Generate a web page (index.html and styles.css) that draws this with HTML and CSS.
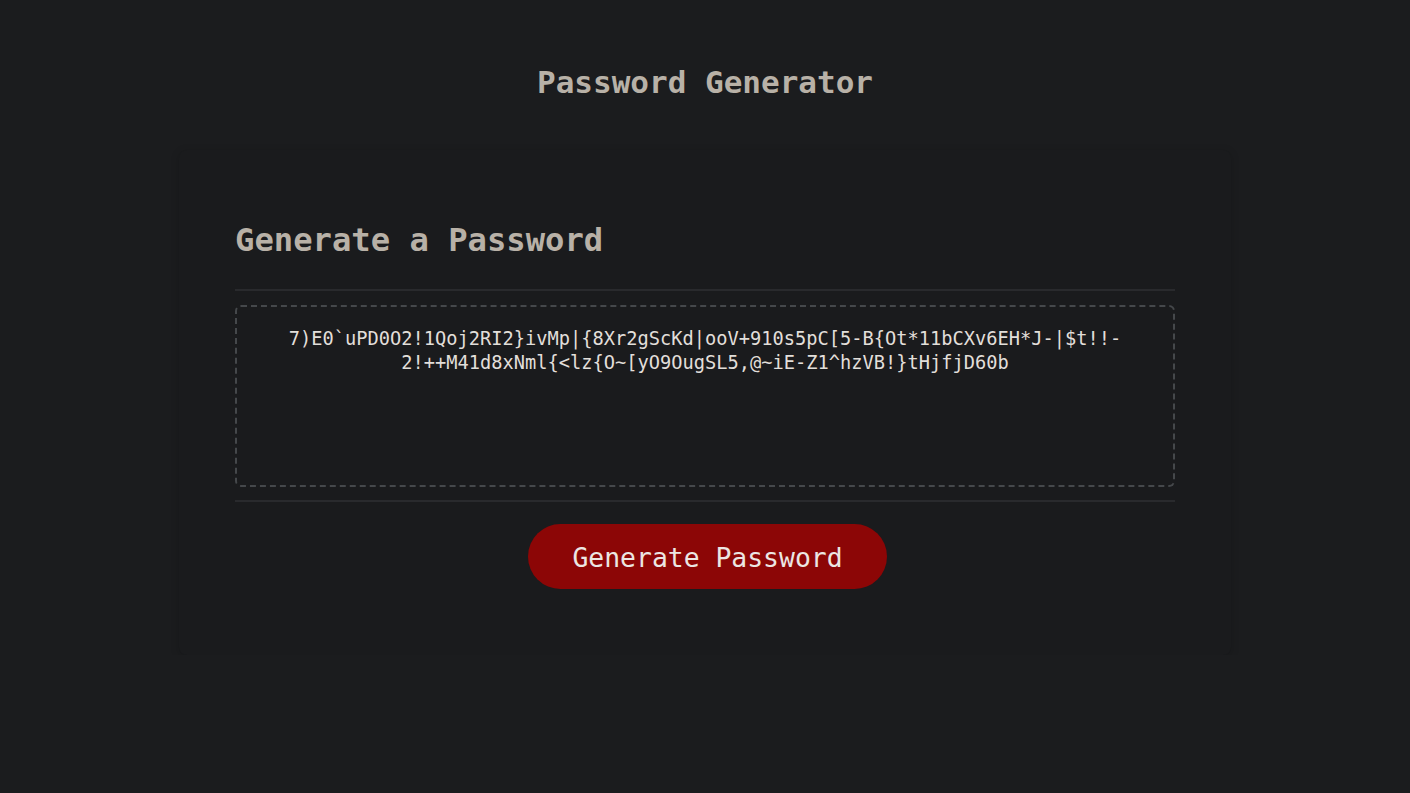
FILE: index.html
```html
<!DOCTYPE html>
<html lang="en">
<head>
<meta charset="UTF-8">
<title>Password Generator</title>
<link rel="stylesheet" href="styles.css">
</head>
<body>
<div class="wrapper">
  <header class="page-header">
    <h1>Password Generator</h1>
  </header>
  <div class="card">
    <div class="card-header">
      <h2>Generate a Password</h2>
    </div>
    <div class="card-body">
      <textarea readonly id="password" class="password" aria-label="Generated Password">7)E0`uPD0O2!1Qoj2RI2}ivMp|{8Xr2gScKd|ooV+910s5pC[5-B{Ot*11bCXv6EH*J-|$t!!-
2!++M41d8xNml{&lt;lz{O~[yO9OugSL5,@~iE-Z1^hzVB!}tHjfjD60b</textarea>
    </div>
    <div class="card-footer">
      <button class="btn">Generate Password</button>
    </div>
  </div>
</div>
</body>
</html>
```

FILE: styles.css
```css
html, body {
  margin: 0;
  padding: 0;
  background: #1b1c1e;
  font-family: "DejaVu Sans Mono", "Liberation Mono", monospace;
}

.wrapper {
  padding-top: 62px;
}

.page-header {
  text-align: center;
}

.page-header h1 {
  margin: 0;
  font-size: 31px;
  line-height: 40px;
  font-weight: bold;
  color: #b8b1a7;
}

.card {
  width: 940px;
  margin: 48px auto 0;
  padding: 70px 56px 66px;
  background: #1a1b1d;
  border-radius: 8px;
  box-shadow: rgba(0, 0, 0, 0.18) 0 2px 8px 0;
}

.card-header h2 {
  margin: 0 0 29px;
  font-size: 32.2px;
  line-height: 40px;
  font-weight: bold;
  color: #b8b1a7;
}

.card-header::after {
  content: "";
  display: block;
  height: 2px;
  background: #292a2d;
}

.card-body {
  padding: 14px 0 13px;
}

.password {
  display: block;
  box-sizing: border-box;
  width: 100%;
  height: 182px;
  margin: 0;
  padding: 20px 15px 0;
  background: transparent;
  border: 2px dashed #45484b;
  border-radius: 6px;
  color: #e2dfda;
  font-family: "DejaVu Sans Mono", "Liberation Mono", monospace;
  font-size: 18.7px;
  line-height: 24px;
  text-align: center;
  resize: none;
  overflow: hidden;
  outline: none;
}

.card-footer {
  text-align: center;
}

.card-footer::before {
  content: "";
  display: block;
  height: 2px;
  background: #292a2d;
  margin-bottom: 22px;
}

.btn {
  border: none;
  background: #8c0606;
  color: #ece6e3;
  border-radius: 33px;
  margin-left: 5px;
  font-family: "DejaVu Sans Mono", "Liberation Mono", monospace;
  font-size: 26.4px;
  line-height: 27px;
  padding: 20px 44px 18px;
  cursor: pointer;
}
```
